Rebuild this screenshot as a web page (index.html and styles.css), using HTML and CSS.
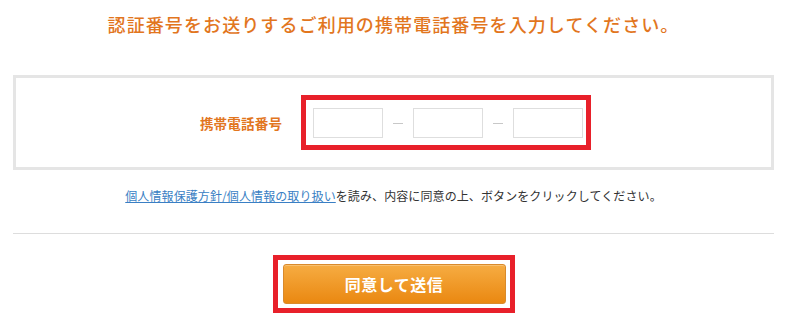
FILE: index.html
```html
<!DOCTYPE html>
<html lang="ja">
<head>
<meta charset="utf-8">
<link rel="stylesheet" href="styles.css">
</head>
<body>
<div class="page">
  <h2 class="title">認証番号をお送りするご利用の携帯電話番号を入力してください。</h2>
  <div class="box">
    <div class="row">
      <span class="label">携帯電話番号</span>
      <div class="hl">
        <input class="tel" type="text">
        <span class="dash"></span>
        <input class="tel" type="text">
        <span class="dash"></span>
        <input class="tel" type="text">
      </div>
    </div>
  </div>
  <p class="note"><a href="#" class="link">個人情報保護方針/個人情報の取り扱い</a>を読み、内容に同意の上、ボタンをクリックしてください。</p>
  <hr class="rule">
  <div class="btnwrap">
    <div class="hl hl-btn">
      <button class="submit" type="button">同意して送信</button>
    </div>
  </div>
</div>
</body>
</html>
```
FILE: styles.css
```css
html, body {
  margin: 0;
  padding: 0;
  background: #ffffff;
}
body {
  font-family: "Noto Sans CJK JP", "Noto Sans", sans-serif;
  width: 787px;
  height: 316px;
  overflow: hidden;
}
.page {
  padding: 0 13px;
}
.title {
  margin: 0;
  padding-top: 11px;
  height: 75px;
  box-sizing: border-box;
  text-align: center;
  font-size: 18px;
  letter-spacing: 1.1px;
  font-weight: 500;
  line-height: 27px;
  color: #e2761e;
}
.box {
  border: 3px solid #e5e5e5;
  height: 95px;
  box-sizing: border-box;
  display: flex;
  align-items: center;
  justify-content: center;
}
.row {
  display: flex;
  align-items: center;
  gap: 19px;
  margin-left: 4px;
}
.label {
  font-size: 13.5px;
  font-weight: bold;
  color: #e2761e;
  letter-spacing: 0.2px;
}
.hl {
  border: 5px solid #e8202a;
  display: flex;
  align-items: center;
  padding: 8px 3px 7px 7px;
  box-sizing: content-box;
}
.row .hl {
  height: 30px;
}
.tel {
  width: 70px;
  height: 30px;
  box-sizing: border-box;
  border: 1px solid #dedede;
  margin: 0;
  padding: 0;
  outline: none;
  background: #fff;
}
.dash {
  width: 10px;
  height: 1px;
  background: #c8c8c8;
  margin: 0 10px;
}
.note {
  margin: 0;
  padding-top: 17px;
  height: 63px;
  box-sizing: border-box;
  text-align: center;
  font-size: 12px;
  letter-spacing: 0.1px;
  line-height: 18px;
  color: #333333;
}
.link {
  color: #3a7fc4;
  text-decoration: underline;
}
.rule {
  margin: 0;
  border: 0;
  height: 1px;
  background: #dddddd;
}
.btnwrap {
  display: flex;
  justify-content: center;
  padding-top: 21px;
}
.hl-btn {
  height: 40px;
  padding: 4px 4px 4px 5px;
}
.submit {
  width: 223px;
  height: 40px;
  border: 1px solid #d98a2c;
  border-radius: 3px;
  background: linear-gradient(#f6ac42, #ea8811);
  color: #ffffff;
  font-family: "Noto Sans CJK JP", "Noto Sans", sans-serif;
  font-size: 16px;
  font-weight: bold;
  letter-spacing: 0.5px;
  padding: 0;
  box-shadow: inset 0 1px 0 rgba(255,255,255,0.25);
}
```
